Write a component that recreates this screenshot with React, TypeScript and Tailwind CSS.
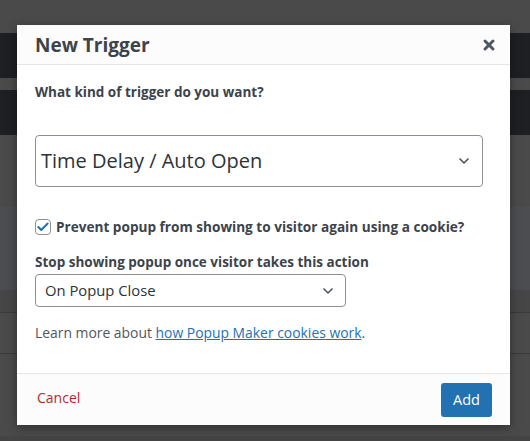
import { X, ChevronDown, Check } from "lucide-react";

const font = { fontFamily: '"Open Sans", "Noto Sans", sans-serif' };

const Backdrop = () => (
  <div className="flex flex-col">
    <div className="h-[33px] bg-[#4a4a4a]" />
    <div className="h-[45px] bg-[#1d1f22]" />
    <div className="h-[12px] bg-[#4a4a4a]" />
    <div className="h-[45px] bg-[#1d1f22]" />
    <div className="h-[72px] bg-[#4a4a4a]" />
    <div className="h-[83px] bg-[#4b4d50]" />
    <div className="h-[23px] bg-[#464646] border-b border-[#3a3a3a]" />
    <div className="h-[41px] bg-[#4a4a4a] border-b border-[#3a3a3a]" />
    <div className="h-[82px] bg-[#4a4a4a]" />
    <div className="h-[5px] bg-[#444444]" />
  </div>
);

export default function App() {
  return (
    <div className="relative w-[530px] h-[441px] overflow-hidden" style={font}>
      <Backdrop />

      <div className="absolute left-[17px] top-[25px] w-[493px] h-[400px] bg-white flex flex-col shadow-[0_3px_10px_rgba(0,0,0,0.35)]">
        {/* Header */}
        <div className="h-[40px] shrink-0 bg-[#fcfcfc] border-b border-[#e6e6e6] flex items-center justify-between pl-[18px] pr-[13px]">
          <h2 className="text-[19px] font-bold text-[#3c434a] leading-none mt-[1px]">
            New Trigger
          </h2>
          <X className="w-[16px] h-[16px] text-[#50575e]" strokeWidth={4.5} />
        </div>

        {/* Body */}
        <div className="flex-1 px-[18px] pt-[19px]">
          <p className="text-[13.5px] font-bold text-[#3c434a] leading-[17px]">
            What kind of trigger do you want?
          </p>

          <div className="mt-[34px] h-[52px] w-[448px] border border-[#8c8f94] rounded-[4px] flex items-center justify-between pl-[5px] pr-[10px]">
            <span className="text-[20px] text-[#2c3338]">Time Delay / Auto Open</span>
            <ChevronDown className="w-[16px] h-[16px] text-[#50575e]" strokeWidth={2.5} />
          </div>

          <label className="mt-[31px] flex items-center gap-[5px]">
            <span className="w-[16px] h-[16px] border border-[#8c8f94] rounded-[4px] flex items-center justify-center bg-white shrink-0">
              <Check className="w-[14px] h-[14px] text-[#2271b1]" strokeWidth={3.5} />
            </span>
            <span className="text-[13.6px] font-bold text-[#3c434a] leading-[17px]">
              Prevent popup from showing to visitor again using a cookie?
            </span>
          </label>

          <p className="mt-[19px] text-[13.5px] font-bold text-[#3c434a] leading-[17px]">
            Stop showing popup once visitor takes this action
          </p>

          <div className="mt-[3px] h-[33px] w-[311px] border border-[#8c8f94] rounded-[4px] flex items-center justify-between pl-[9px] pr-[9px]">
            <span className="text-[14.8px] text-[#2c3338]">On Popup Close</span>
            <ChevronDown className="w-[16px] h-[16px] text-[#50575e]" strokeWidth={2.5} />
          </div>

          <p className="mt-[16px] text-[13.9px] text-[#50575e] leading-[19px]">
            Learn more about{" "}
            <a href="#" className="text-[#2271b1] underline">
              how Popup Maker cookies work
            </a>
            .
          </p>
        </div>

        {/* Footer */}
        <div className="h-[52px] shrink-0 bg-[#fcfcfc] border-t border-[#e6e6e6] flex items-center justify-between pl-[20px] pr-[18px]">
          <a href="#" className="text-[14px] text-[#b32d2e] mb-[4px]">Cancel</a>
          <button className="h-[34px] w-[51px] bg-[#2271b1] rounded-[3px] text-white text-[14.5px]">
            Add
          </button>
        </div>
      </div>
    </div>
  );
}
